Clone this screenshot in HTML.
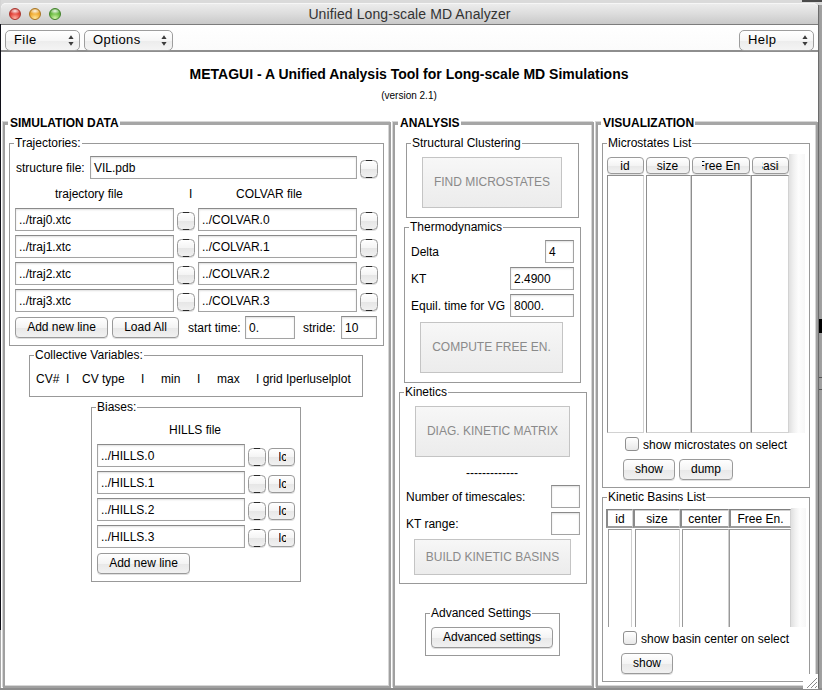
<!DOCTYPE html>
<html><head><meta charset="utf-8">
<style>
*{box-sizing:border-box;margin:0;padding:0}
html,body{width:822px;height:690px;overflow:hidden;background:#a6a6a6}
body{font-family:"Liberation Sans",sans-serif;font-size:12px;color:#000;position:relative}
.abs{position:absolute}
#win{position:absolute;left:1px;top:3px;width:817px;height:685px;background:#fff;border-radius:5px 5px 0 0;overflow:hidden}
#title{position:absolute;left:0;top:0;width:100%;height:22px;background:linear-gradient(#ececec 0%,#dedede 45%,#c9c9c9 100%);border-bottom:1px solid #7c7c7c;border-top:1px solid #f6f6f6;border-radius:5px 5px 0 0}
#title .t{position:absolute;left:0;width:100%;text-align:center;top:2px;font-size:14px;letter-spacing:.1px;color:#333;line-height:16px}
.tl{position:absolute;top:4px;width:12px;height:12px;border-radius:50%}
#menubar{position:absolute;left:0;top:22px;width:100%;height:27px;background:linear-gradient(#ffffff,#fbfbfb);border-bottom:2px solid #8e8e8e}
.pop{position:absolute;height:21px;border:1px solid #9d9d9d;border-radius:5px;background:linear-gradient(#ffffff 0%,#f6f6f6 50%,#ececec 51%,#f4f4f4 100%);font-size:13px;letter-spacing:.4px;line-height:18px;padding-left:8px}
.pop svg{position:absolute;top:4px}
.lbl{position:absolute;white-space:nowrap;line-height:14px}
.grp{position:absolute;border:1px solid #999}
.grp>.cap{position:absolute;top:-8px;background:#fff;padding:0 1px;line-height:14px;white-space:nowrap}
.panel{position:absolute;border:2px solid #a0a0a0;border-top:3px solid #a6a6a6;box-shadow:-1px -1px 0 #d6d6d6, inset -1px -1px 0 #d6d6d6}
.panel>.cap{position:absolute;top:-9px;left:3px;background:#fff;padding:0 1px 0 2px;font-weight:bold;line-height:14px;white-space:nowrap}
.inp{position:absolute;border:1px solid #a3a3a3;border-top-color:#8a8a8a;background:#fff;line-height:20px;padding-left:3px;white-space:nowrap;overflow:hidden;box-shadow:inset 0 1px 2px rgba(0,0,0,.13)}
.btn{position:absolute;border:1px solid #9a9a9a;border-radius:4px;background:linear-gradient(#ffffff 0%,#f4f4f4 50%,#e8e8e8 51%,#f1f1f1 100%);text-align:center;white-space:nowrap;overflow:hidden;box-shadow:0 1px 0 rgba(0,0,0,.12)}
.sb{position:absolute;width:18px;height:18px;border:1px solid #9a9a9a;border-radius:4.5px;background:linear-gradient(#ffffff 0%,#f4f4f4 50%,#e6e6e6 51%,#f0f0f0 100%);box-shadow:0 1px 0 rgba(0,0,0,.12)}
.sb::before,.sb::after{content:'';position:absolute;left:5px;width:6px;height:1px;background:#2a2a2a}
.sb::before{top:-1px}
.sb::after{bottom:-1px}
.big{position:absolute;border:1px solid #c4c4c4;background:linear-gradient(#f7f7f7,#f1f1f1 50%,#ececec);color:#8a8a8a;text-align:center;white-space:nowrap}
.cb{position:absolute;width:14px;height:14px;border:1px solid #8f8f8f;border-radius:3px;background:linear-gradient(#fff,#e8e8e8)}
.th{position:absolute;top:509px;height:19px;line-height:18px;text-align:center;background:#fff;border-top:1px solid #808080;border-left:2px solid #8a8a8a;border-bottom:2px solid #9c9c9c;border-right:1px solid #d4d4d4;box-shadow:inset 0 1px 0 #d0d0d0;white-space:nowrap;overflow:hidden}
.tc{position:absolute;top:529px;height:98px;border-left:1px solid #999;border-right:1px solid #cfcfcf;border-top:1px solid #999}
.col{position:absolute;top:175px;height:258px;border-top:1px solid #8e8e8e;border-left:1px solid #8e8e8e;border-right:1px solid #d2d2d2;border-bottom:1px solid #d2d2d2}
.hb{position:absolute;left:8.5px;right:9.5px;top:0;bottom:0;overflow:hidden}
.hb span{position:absolute;left:50%;transform:translateX(-50%);white-space:nowrap}
.sc{position:absolute;background:linear-gradient(90deg,#e0e0e0 0%,#f1f1f1 30%,#fdfdfd 60%,#f7f7f7 100%)}
</style></head><body>
<div class="abs" style="left:0;top:0;width:822px;height:9px;background:#dadada"></div>
<div class="abs" style="left:0;top:0;width:1px;height:24px;background:#d4d4d4"></div>
<div class="abs" style="left:802px;top:0;width:20px;height:2px;background:#4a4a4a"></div>
<div class="abs" style="left:0;top:24px;width:1px;height:606px;background:#101018"></div>
<div class="abs" style="left:818px;top:5px;width:4px;height:685px;background:linear-gradient(90deg,#6c6c6c 0,#6c6c6c 25%,#9a9a9a 26%,#a2a2a2 100%)"></div>
<div class="abs" style="left:0;top:688px;width:822px;height:2px;background:#8c8c8c"></div>
<div class="abs" style="left:819px;top:319px;width:3px;height:14px;background:#000"></div>
<div class="abs" style="left:819px;top:377px;width:3px;height:1px;background:#555"></div>
<div class="abs" style="left:819px;top:389px;width:3px;height:1px;background:#555"></div>
<div id="win">
 <div id="title">
  <div class="tl" style="left:8px;background:radial-gradient(ellipse 55% 32% at 50% 20%,rgba(255,255,255,.9),rgba(255,255,255,0) 100%),radial-gradient(circle at 50% 95%,#ffb8a8 0%,#e5483f 50%,#c9342d 85%);border:1px solid #a8332c"></div>
  <div class="tl" style="left:28px;background:radial-gradient(ellipse 55% 32% at 50% 20%,rgba(255,255,255,.9),rgba(255,255,255,0) 100%),radial-gradient(circle at 50% 95%,#ffe9a0 0%,#f2ae36 50%,#d89420 85%);border:1px solid #a87420"></div>
  <div class="tl" style="left:48px;background:radial-gradient(ellipse 55% 32% at 50% 20%,rgba(255,255,255,.9),rgba(255,255,255,0) 100%),radial-gradient(circle at 50% 95%,#d8f7b0 0%,#72c048 50%,#4da030 85%);border:1px solid #3f8028"></div>
  <div class="t">Unified Long-scale MD Analyzer</div>
 </div>
 <div id="menubar"></div>
</div>
<div id="c" class="abs" style="left:0;top:0;width:822px;height:690px">
 <div class="pop" style="left:5px;top:30px;width:75px">File<svg width="6" height="11" viewBox="0 0 6 11" style="left:62px"><path d="M3 0.3L5.6 4H0.4Z M3 10.7L5.6 7H0.4Z" fill="#3c3c3c"/></svg></div>
 <div class="pop" style="left:84px;top:30px;width:89px">Options<svg width="6" height="11" viewBox="0 0 6 11" style="left:76px"><path d="M3 0.3L5.6 4H0.4Z M3 10.7L5.6 7H0.4Z" fill="#3c3c3c"/></svg></div>
 <div class="pop" style="left:739px;top:30px;width:75px">Help<svg width="6" height="11" viewBox="0 0 6 11" style="left:62px"><path d="M3 0.3L5.6 4H0.4Z M3 10.7L5.6 7H0.4Z" fill="#3c3c3c"/></svg></div>
 <div class="lbl" style="left:0;width:818px;text-align:center;top:66px;font-size:14px;font-weight:bold;line-height:16px">METAGUI - A Unified Analysis Tool for Long-scale MD Simulations</div>
 <div class="lbl" style="left:0;width:818px;text-align:center;top:90px;font-size:10px;line-height:12px">(version 2.1)</div>
 <div class="panel" style="left:3px;top:122px;width:388px;height:566px"><div class="cap">SIMULATION DATA</div></div>
 <div class="grp" style="left:9px;top:143px;width:375px;height:203px"><div class="cap" style="left:4px">Trajectories:</div></div>
 <div class="lbl" style="left:16px;top:161px;">structure file:</div>
 <div class="inp" style="left:90px;top:156px;width:267px;height:23px;line-height:22px">VIL.pdb</div>
 <div class="sb" style="left:360px;top:160px"></div>
 <div class="lbl" style="left:55px;top:187px;">trajectory file</div>
 <div class="lbl" style="left:189px;top:187px;">I</div>
 <div class="lbl" style="left:236px;top:187px;">COLVAR file</div>
 <div class="inp" style="left:15px;top:208px;width:159px;height:23px;line-height:22px">../traj0.xtc</div>
 <div class="sb" style="left:177px;top:212px"></div>
 <div class="inp" style="left:198px;top:208px;width:159px;height:23px;line-height:22px">../COLVAR.0</div>
 <div class="sb" style="left:360px;top:212px"></div>
 <div class="inp" style="left:15px;top:235px;width:159px;height:23px;line-height:22px">../traj1.xtc</div>
 <div class="sb" style="left:177px;top:239px"></div>
 <div class="inp" style="left:198px;top:235px;width:159px;height:23px;line-height:22px">../COLVAR.1</div>
 <div class="sb" style="left:360px;top:239px"></div>
 <div class="inp" style="left:15px;top:262px;width:159px;height:23px;line-height:22px">../traj2.xtc</div>
 <div class="sb" style="left:177px;top:266px"></div>
 <div class="inp" style="left:198px;top:262px;width:159px;height:23px;line-height:22px">../COLVAR.2</div>
 <div class="sb" style="left:360px;top:266px"></div>
 <div class="inp" style="left:15px;top:289px;width:159px;height:23px;line-height:22px">../traj3.xtc</div>
 <div class="sb" style="left:177px;top:293px"></div>
 <div class="inp" style="left:198px;top:289px;width:159px;height:23px;line-height:22px">../COLVAR.3</div>
 <div class="sb" style="left:360px;top:293px"></div>
 <div class="btn" style="left:15px;top:317px;width:93px;height:21px;line-height:19px;">Add new line</div>
 <div class="btn" style="left:112px;top:317px;width:67px;height:21px;line-height:19px;">Load All</div>
 <div class="lbl" style="left:188px;top:321px;">start time:</div>
 <div class="inp" style="left:245px;top:316px;width:50px;height:23px;line-height:22px">0.</div>
 <div class="lbl" style="left:303px;top:321px;">stride:</div>
 <div class="inp" style="left:341px;top:316px;width:36px;height:23px;line-height:22px">10</div>
 <div class="grp" style="left:29px;top:355px;width:334px;height:42px"><div class="cap" style="left:4px">Collective Variables:</div></div>
 <div class="lbl" style="left:36px;top:372px;">CV#</div>
 <div class="lbl" style="left:66px;top:372px;">I</div>
 <div class="lbl" style="left:82px;top:372px;">CV type</div>
 <div class="lbl" style="left:141px;top:372px;">I</div>
 <div class="lbl" style="left:161px;top:372px;">min</div>
 <div class="lbl" style="left:197px;top:372px;">I</div>
 <div class="lbl" style="left:217px;top:372px;">max</div>
 <div class="lbl" style="left:256px;top:372px;">I grid Iperluselplot</div>
 <div class="grp" style="left:91px;top:407px;width:210px;height:175px"><div class="cap" style="left:4px">Biases:</div></div>
 <div class="lbl" style="left:169px;top:423px;">HILLS file</div>
 <div class="inp" style="left:97px;top:444px;width:148px;height:23px;line-height:22px">../HILLS.0</div>
 <div class="sb" style="left:248px;top:448px"></div>
 <div class="btn" style="left:268px;top:448px;width:27px;height:18px;line-height:16px;text-align:left;padding-left:9.5px"><span style="display:inline-block;width:7.4px;overflow:hidden;vertical-align:top">lc</span></div>
 <div class="inp" style="left:97px;top:471px;width:148px;height:23px;line-height:22px">../HILLS.1</div>
 <div class="sb" style="left:248px;top:475px"></div>
 <div class="btn" style="left:268px;top:475px;width:27px;height:18px;line-height:16px;text-align:left;padding-left:9.5px"><span style="display:inline-block;width:7.4px;overflow:hidden;vertical-align:top">lc</span></div>
 <div class="inp" style="left:97px;top:498px;width:148px;height:23px;line-height:22px">../HILLS.2</div>
 <div class="sb" style="left:248px;top:502px"></div>
 <div class="btn" style="left:268px;top:502px;width:27px;height:18px;line-height:16px;text-align:left;padding-left:9.5px"><span style="display:inline-block;width:7.4px;overflow:hidden;vertical-align:top">lc</span></div>
 <div class="inp" style="left:97px;top:525px;width:148px;height:23px;line-height:22px">../HILLS.3</div>
 <div class="sb" style="left:248px;top:529px"></div>
 <div class="btn" style="left:268px;top:529px;width:27px;height:18px;line-height:16px;text-align:left;padding-left:9.5px"><span style="display:inline-block;width:7.4px;overflow:hidden;vertical-align:top">lc</span></div>
 <div class="btn" style="left:97px;top:553px;width:93px;height:21px;line-height:19px;">Add new line</div>
 <div class="panel" style="left:393px;top:122px;width:201px;height:566px"><div class="cap">ANALYSIS</div></div>
 <div class="grp" style="left:406px;top:143px;width:173px;height:75px"><div class="cap" style="left:4px">Structural Clustering</div></div>
 <div class="big" style="left:422px;top:157px;width:140px;height:51px;line-height:49px">FIND MICROSTATES</div>
 <div class="grp" style="left:404px;top:227px;width:177px;height:156px"><div class="cap" style="left:4px">Thermodynamics</div></div>
 <div class="lbl" style="left:411px;top:245px;">Delta</div>
 <div class="inp" style="left:545px;top:240px;width:29px;height:23px;line-height:22px">4</div>
 <div class="lbl" style="left:411px;top:272px;">KT</div>
 <div class="inp" style="left:510px;top:267px;width:64px;height:23px;line-height:22px">2.4900</div>
 <div class="lbl" style="left:411px;top:299px;">Equil. time for VG</div>
 <div class="inp" style="left:510px;top:294px;width:64px;height:23px;line-height:22px">8000.</div>
 <div class="big" style="left:420px;top:322px;width:143px;height:51px;line-height:49px">COMPUTE FREE EN.</div>
 <div class="grp" style="left:399px;top:392px;width:188px;height:192px"><div class="cap" style="left:4px">Kinetics</div></div>
 <div class="big" style="left:415px;top:406px;width:155px;height:51px;line-height:49px">DIAG. KINETIC MATRIX</div>
 <div class="lbl" style="left:466px;top:466px;">-------------</div>
 <div class="lbl" style="left:406px;top:490px;">Number of timescales:</div>
 <div class="inp" style="left:551px;top:485px;width:29px;height:23px;line-height:22px"></div>
 <div class="lbl" style="left:406px;top:517px;">KT range:</div>
 <div class="inp" style="left:551px;top:512px;width:29px;height:23px;line-height:22px"></div>
 <div class="big" style="left:414px;top:539px;width:157px;height:36px;line-height:34px">BUILD KINETIC BASINS</div>
 <div class="grp" style="left:425px;top:613px;width:135px;height:43px"><div class="cap" style="left:4px">Advanced Settings</div></div>
 <div class="btn" style="left:431px;top:627px;width:122px;height:21px;line-height:19px;">Advanced settings</div>
 <div class="panel" style="left:596px;top:122px;width:222px;height:566px"><div class="cap">VISUALIZATION</div></div>
 <div class="grp" style="left:602px;top:143px;width:208px;height:345px"><div class="cap" style="left:4px">Microstates List</div></div>
 <div class="col" style="left:607px;width:37px"></div>
 <div class="col" style="left:646px;width:45px"></div>
 <div class="col" style="left:691px;width:60px"></div>
 <div class="col" style="left:751px;width:38px"></div>
 <div class="btn" style="left:607px;top:157px;width:37px;height:17px;line-height:15px;line-height:16px"><div class="hb"><span>id</span></div></div>
 <div class="btn" style="left:646px;top:157px;width:44px;height:17px;line-height:15px;line-height:16px"><div class="hb"><span>size</span></div></div>
 <div class="btn" style="left:692px;top:157px;width:58px;height:17px;line-height:15px;line-height:16px"><div class="hb"><span>Free En.</span></div></div>
 <div class="btn" style="left:752px;top:157px;width:37px;height:17px;line-height:15px;line-height:16px"><div class="hb"><span>Basin</span></div></div>
 <div class="sc" style="left:789px;top:154px;width:16px;height:279px"></div>
 <div class="cb" style="left:625px;top:437px"></div>
 <div class="lbl" style="left:643px;top:438px;">show microstates on select</div>
 <div class="btn" style="left:623px;top:459px;width:52px;height:21px;line-height:19px;">show</div>
 <div class="btn" style="left:679px;top:459px;width:54px;height:21px;line-height:19px;">dump</div>
 <div class="grp" style="left:602px;top:497px;width:208px;height:185px"><div class="cap" style="left:4px">Kinetic Basins List</div></div>
 <div class="sc" style="left:791px;top:508px;width:15px;height:119px"></div>
 <div class="th" style="left:606px;width:27px">id</div>
 <div class="th" style="left:633px;width:47px">size</div>
 <div class="th" style="left:680px;width:49px">center</div>
 <div class="th" style="left:729px;width:62px">Free En.</div>
 <div class="tc" style="left:608px;width:24px"></div>
 <div class="tc" style="left:635px;width:45px"></div>
 <div class="tc" style="left:682px;width:47px"></div>
 <div class="tc" style="left:729px;width:62px"></div>
 <div class="cb" style="left:623px;top:631px"></div>
 <div class="lbl" style="left:641px;top:632px;">show basin center on select</div>
 <div class="btn" style="left:621px;top:653px;width:52px;height:21px;line-height:19px;">show</div>
 <svg class="abs" style="left:803px;top:674px" width="15" height="15" viewBox="0 0 15 15"><rect width="15" height="15" fill="#fff"/><path d="M4 14L14 4M8 14L14 8M12 14L14 12" stroke="#8a8a8a" stroke-width="1"/></svg>
</div>
</body></html>
